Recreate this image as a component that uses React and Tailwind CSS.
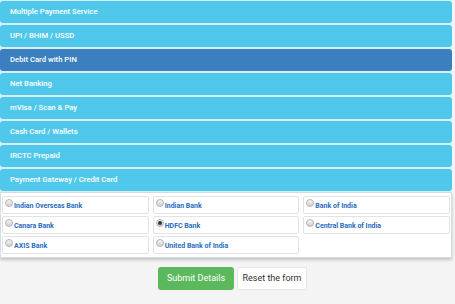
const methods = [
  "Multiple Payment Service",
  "UPI / BHIM / USSD",
  "Debit Card with PIN",
  "Net Banking",
  "mVisa / Scan & Pay",
  "Cash Card / Wallets",
  "IRCTC Prepaid",
  "Payment Gateway / Credit Card",
];

const banks = [
  ["Indian Overseas Bank", "Indian Bank", "Bank of India"],
  ["Canara Bank", "HDFC Bank", "Central Bank of India"],
  ["AXIS Bank", "United Bank of India", null],
];

function Radio({ checked }) {
  return (
    <span className="w-[8px] h-[8px] rounded-full border border-[#b5b5b5] bg-gradient-to-b from-[#f4f4f4] to-[#d0d0d0] flex items-center justify-center -mt-[4px] shrink-0">
      {checked && <span className="w-[4px] h-[4px] rounded-full bg-[#333]"></span>}
    </span>
  );
}

export default function App() {
  return (
    <div className="w-[455px] h-[304px] bg-[#f4f4f4] overflow-hidden font-['Roboto',sans-serif]">
      <div className="w-[452px] bg-[#d9eff7] flex flex-col gap-[2px] pt-[1px] pb-[1px]">
        {methods.map((m, i) => (
          <div
            key={m}
            className={`h-[22px] rounded-[3px] flex items-center pl-[10px] text-[7.7px] font-medium text-white ${i === 2 ? "bg-[#3b7fbe]" : "bg-[#4fc8ec]"}`}
          >
            {m}
          </div>
        ))}
      </div>
      <div className="w-[452px] bg-white border border-[#d4dbe3] shadow-[0_2px_3px_rgba(0,0,0,0.2)] px-[1px] pt-[3px] pb-[3px] flex flex-col gap-[2px]">
        {banks.map((row, r) => (
          <div key={r} className="grid grid-cols-3 gap-[4px]">
            {row.map((b, c) =>
              b ? (
                <div key={c} className="h-[18px] border border-[#e3e3e3] rounded-[2px] flex items-center pl-[2px] gap-[1px] text-[7px] font-bold text-[#2a6cc0]">
                  <Radio checked={b === "HDFC Bank"} />
                  <span className="mt-[2px]">{b}</span>
                </div>
              ) : (
                <div key={c}></div>
              )
            )}
          </div>
        ))}
      </div>
      <div className="flex justify-center items-center gap-[3px] mt-[9px] pl-[10px]">
        <button className="w-[76px] h-[23px] rounded-[3px] bg-[#5cb85c] text-white text-[9px]">Submit Details</button>
        <button className="w-[70px] h-[23px] rounded-[2px] bg-white border border-[#e6e6e6] text-[#333] text-[9px]">Reset the form</button>
      </div>
    </div>
  );
}
